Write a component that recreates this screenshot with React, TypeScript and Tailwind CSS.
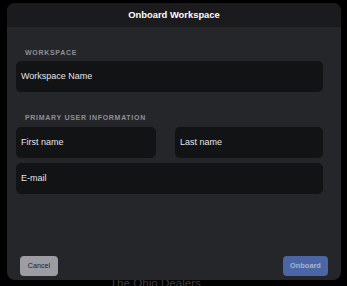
import React from 'react'

const font = { fontFamily: '"Liberation Sans", Arial, sans-serif' }

function Field({ placeholder }: { placeholder: string }) {
  return (
    <div className="h-[31px] rounded-[5px] bg-[#121315] flex items-center px-[5px] text-[9px] text-[#e4e4e6]">
      {placeholder}
    </div>
  )
}

function SectionLabel({ children }: { children: React.ReactNode }) {
  return (
    <div className="pl-[9px] h-[10px] leading-[10px] text-[7px] font-bold tracking-[0.7px] text-[#8f8f94] uppercase">
      {children}
    </div>
  )
}

export default function App() {
  return (
    <main style={font} className="relative w-[347px] h-[286px] overflow-hidden bg-black">
      {/* page content behind the dim overlay */}
      <div className="absolute left-[110px] top-[276px] text-[11.6px] leading-[14px] text-[#3e3e41]">
        The Ohio Dealers
      </div>

      <div className="relative pl-[7px] pt-[3px]">
        <div className="w-[334px] h-[277px] rounded-[8px] bg-[#252629] overflow-hidden flex flex-col">
          <div className="h-[24px] bg-[#1b1b1d] flex items-center justify-center text-white text-[9.4px] font-bold">
            Onboard Workspace
          </div>

          <div className="pl-[9px] pr-[18px] pt-[21px]">
            <SectionLabel>Workspace</SectionLabel>
            <div className="mt-[3px]">
              <Field placeholder="Workspace Name" />
            </div>

            <div className="mt-[21px]">
              <SectionLabel>Primary User Information</SectionLabel>
            </div>
            <div className="mt-[4px] grid grid-cols-[140px_1fr] gap-x-[19px]">
              <Field placeholder="First name" />
              <Field placeholder="Last name" />
            </div>
            <div className="mt-[5px]">
              <Field placeholder="E-mail" />
            </div>
          </div>

          <div className="mt-auto px-[13px] pb-[4px] flex items-center justify-between">
            <button className="h-[20px] w-[38px] rounded-[4px] bg-[#9c9ca3] text-[#1f2023] text-[7.2px]">
              Cancel
            </button>
            <button className="h-[20px] w-[45px] rounded-[4px] bg-[#4a66a5] text-[#a7b3cd] text-[7.4px] font-semibold">
              Onboard
            </button>
          </div>
        </div>
      </div>
    </main>
  )
}
